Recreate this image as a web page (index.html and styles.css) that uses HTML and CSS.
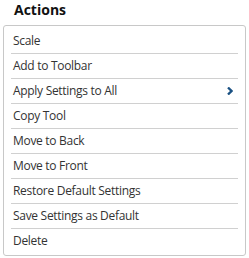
FILE: index.html
```
<!DOCTYPE html>
<html lang="en">
<head>
    <meta charset="UTF-8">
    <meta name="viewport" content="width=device-width, initial-scale=1.0">
    <title>Actions</title>

    <link rel="stylesheet" href="styles.css">
</head>

<body>

    <section class="actions">
        <h2 class="actions__title">Actions</h2>

        <ul class="actions__list">
            <li class="actions__item">Scale</li>
            <li class="actions__item">Add to Toolbar</li>
            <li class="actions__item actions__item_sub">
                Apply Settings to All
                <svg class="actions__arrow" width="6" height="8" viewBox="0 0 6 8">
                    <path d="M1 0.5 L4.5 4 L1 7.5" fill="none" stroke="#1a5183" stroke-width="2.3"/>
                </svg>
            </li>
            <li class="actions__item">Copy Tool</li>
            <li class="actions__item">Move to Back</li>
            <li class="actions__item">Move to Front</li>
            <li class="actions__item">Restore Default Settings</li>
            <li class="actions__item">Save Settings as Default</li>
            <li class="actions__item">Delete</li>
        </ul>
    </section>

</body>

</html>
```
FILE: styles.css
```
body {
    margin: 0;
    font-family: "Open Sans", "Liberation Sans", sans-serif;
    background: #fff;
}

/* ========== ACTIONS =========== */
.actions {
    padding: 0 3px;
}

.actions__title {
    margin: 0 0 6px 11px;
    font-size: 14px;
    line-height: 19px;
    font-weight: 700;
    color: #111;
}

.actions__list {
    margin: 0;
    padding: 3px 7px 2px;
    list-style: none;
    border: 1px solid #c8c8c8;
    border-radius: 3px;
}

.actions__item {
    display: flex;
    align-items: center;
    justify-content: space-between;
    height: 23px;
    padding: 0 5px 1px 2px;
    font-size: 12px;
    letter-spacing: -0.3px;
    color: #333;
    border-bottom: 1px solid #d0d0d0;
}

.actions__item:last-child {
    border-bottom: none;
}

.actions__arrow {
    display: block;
    margin-top: 1px;
}
```
